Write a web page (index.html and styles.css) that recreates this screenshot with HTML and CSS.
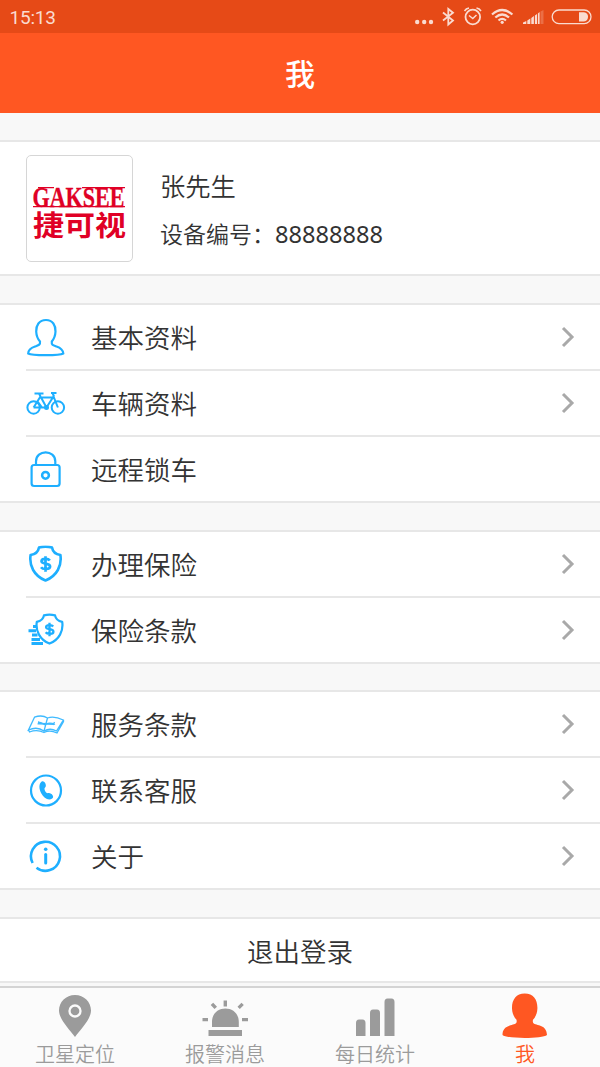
FILE: index.html
```html
<!DOCTYPE html>
<html lang="zh-CN">
<head>
<meta charset="utf-8">
<title>我</title>
<link rel="stylesheet" href="styles.css">
</head>
<body>
<svg class="defs" width="0" height="0">
  <defs>
    <symbol id="chevron" viewBox="0 0 14 22"><path d="M2 2L11 11L2 20" fill="none" stroke="#a9a9a9" stroke-width="3"/></symbol>
    <symbol id="shield" viewBox="0 0 34 37">
      <path d="M10.500 2Q17 .2 23.500 2Q24.600 8.400 31.900 9.500C33.500 20 28.500 30.500 17 35C5.500 30.500.5 20 2.100 9.500Q9.400 8.400 10.500 2Z" fill="none" stroke="currentColor" stroke-width="2.600" stroke-linejoin="round"/>
      <path d="M21.300 15C19.800 12.800 13 12.600 13 15.800C13 19 21.600 17.200 21.600 21C21.600 24.300 14.200 24.100 12.500 21.700M17 10.700V26.300" fill="none" stroke="currentColor" stroke-width="2.700"/>
    </symbol>
  </defs>
</svg>
<div class="screen">
  <header class="top">
    <div class="status">
      <span class="clock">15:13</span>
      <svg class="indicators" width="180" height="24" viewBox="414 5 180 24" fill="none" stroke="#fadbd0" stroke-width="1.500">
        <g fill="#fadbd0" stroke="none"><circle cx="417.200" cy="22" r="2.200"/><circle cx="424.200" cy="22" r="2.200"/><circle cx="431" cy="22" r="2.200"/></g>
        <path d="M443 12.500L453 20.500L448.300 24.500V9L453 12.800L443 20.500" stroke-width="1.800"/>
        <circle cx="472.800" cy="17" r="7.300" stroke-width="1.800"/><path d="M469 15.500L472.800 18.500L476.500 15M464.500 11Q466 8.500 469 8M476.500 8Q479.500 8.500 481 11"/>
        <g stroke-width="2.200"><path d="M492 14.500Q502.200 5.500 512.400 14.500M495.300 17.500Q502.200 11.500 509 17.500M498.500 20.500Q502.200 17.300 506 20.500"/></g><circle cx="502.200" cy="22.300" r="1.600" fill="#fadbd0" stroke="none"/>
        <g fill="#fadbd0" stroke="none"><path d="M523 24V22.500L526.300 21V24ZM527.300 24V20.500L530.300 18.500V24ZM531.300 24V18L533.900 16V24ZM534.900 24V15.500L537 14V24ZM537.900 24V13.500L539.600 12V24Z"/><path d="M540.500 24V11.500L543.500 10V24Z" opacity=".25"/></g>
        <rect x="552.200" y="10" width="38.800" height="13.600" rx="6.800" stroke-width="1.300"/><path d="M579 12.200H584A4.700 4.700 0 0 1 584 21.500H579Z" fill="#fadbd0" stroke="none"/>
      </svg>
    </div>
    <h1 class="title">我</h1>
  </header>

  <main class="content">
    <section class="card profile">
      <div class="avatar">
        <svg width="104" height="104" viewBox="27 156 104 104" fill="#e00025">
          <path d="M38 187H54V188.200H38ZM82 187H125V188.200H82ZM33 206H125V207.300H33Z"/>
          <text class="logo-latin" x="32.500" y="206.500" textLength="92" lengthAdjust="spacingAndGlyphs">GAKSEE</text>
          <text class="logo-han" x="33" y="235.500" textLength="93" lengthAdjust="spacingAndGlyphs">捷可视</text>
        </svg>
      </div>
      <div class="person">
        <div class="name">张先生</div>
        <div class="device">设备编号：<span class="number">88888888</span></div>
      </div>
    </section>

    <section class="card">
      <a class="row">
        <svg class="icon" viewBox="0 0 40 40"><path d="M20 3C13 3 10 8.500 10.200 14.500C10.400 19 12.200 22.500 14 24.500C14.500 28 12.500 28.300 9 29.500C4.500 31 2.300 33.500 2.200 36.500C6 38.700 33.500 38.700 37.300 36.500C37 33.500 35 31 30.500 29.500C27 28.300 25.300 28 25.800 24.500C27.500 22.500 29.300 19 29.500 14.500C29.700 8.500 26.800 3 20 3Z"/></svg>
        <span class="label">基本资料</span><svg class="chevron"><use href="#chevron"/></svg>
      </a>
      <a class="row">
        <svg class="icon bike" viewBox="0 0 40 40"><circle cx="7.600" cy="24.500" r="6.200"/><circle cx="31.900" cy="24.500" r="6.200"/><path d="M7.600 24.500L14.500 13.500L20.500 24.500H7.600M12 19L16 24.500M20.500 24.500L27.500 13.500L31.900 24.500M15.500 14.500H28M8.500 10.500H17.500M25 10H30.500M14.500 13.500L13 10.500M28 13.500L26.500 10"/><circle cx="20.500" cy="24.500" r="1.500"/></svg>
        <span class="label">车辆资料</span><svg class="chevron"><use href="#chevron"/></svg>
      </a>
      <a class="row">
        <svg class="icon" viewBox="0 0 40 40"><rect x="5.600" y="16" width="28" height="21" rx="2.500"/><path d="M10 16V12.500C10 .4 29.300 .4 29.300 12.500V16"/><circle cx="19.500" cy="26.300" r="3.400" stroke-width="2.500"/></svg>
        <span class="label">远程锁车</span>
      </a>
    </section>

    <section class="card">
      <a class="row">
        <svg class="icon" viewBox="0 0 40 40"><use href="#shield" x="2.500" y="1.500" width="34" height="37"/></svg>
        <span class="label">办理保险</span><svg class="chevron"><use href="#chevron"/></svg>
      </a>
      <a class="row">
        <svg class="icon" viewBox="0 0 40 40"><use href="#shield" x="9" y="3" width="29" height="33"/><path d="M7 16.500H10M2.500 20.700H10M6 25H11.500M5.500 29.500H14M5.500 33.500H17" stroke-width="3"/></svg>
        <span class="label">保险条款</span><svg class="chevron"><use href="#chevron"/></svg>
      </a>
    </section>

    <section class="card">
      <a class="row">
        <svg class="icon book" viewBox="0 0 40 40"><path d="M8.500 13.200Q16 10.500 21.500 14Q28 11.500 37.300 16L30.500 27Q24 23.500 18 27Q11 22 2.500 26ZM2.500 26L3.500 28Q11 25 18 28.500Q24 25.500 31 29L37.500 17.500V16M21.500 14L18 27M12 18Q15.500 18.500 18.500 20.500L20 20Q24 18 29 20.500M13 17.500L12 20.500M28.500 18L27 21"/><path d="M13 19.600L28 20.200" stroke-width="1.800"/></svg>
        <span class="label">服务条款</span><svg class="chevron"><use href="#chevron"/></svg>
      </a>
      <a class="row">
        <svg class="icon" viewBox="0 0 40 40"><circle cx="20" cy="20.500" r="15"/><path d="M15.400 11.700C18.500 9.700 21.300 16 19.100 17.400C17.300 18.500 20 23.700 22 23.100C25 22 29 26.700 26.200 28.500C22.500 30.900 17.800 28.300 15.200 23.300C12.800 18.500 12.800 14 15.400 11.700Z" fill="currentColor" stroke="none"/></svg>
        <span class="label">联系客服</span><svg class="chevron"><use href="#chevron"/></svg>
      </a>
      <a class="row">
        <svg class="icon" viewBox="0 0 40 40"><path class="ring" d="M6.600 27A14.500 14.500 0 1 1 10.500 31.700"/><path class="stem" d="M19.700 18.500V27"/><circle cx="19.700" cy="13.300" r="1.800" fill="currentColor" stroke="none"/></svg>
        <span class="label">关于</span><svg class="chevron"><use href="#chevron"/></svg>
      </a>
    </section>

    <section class="card"><a class="row logout">退出登录</a></section>
  </main>

  <nav class="tabs">
    <a class="tab"><svg class="tab-icon" viewBox="0 0 50 50"><path d="M25 4C16 4 9 11 9 19.500C9 28 19 38 25 46C31 38 41 28 41 19.500C41 11 34 4 25 4Z"/><circle cx="25" cy="20" r="5.500" fill="#9b9b9b" stroke="#fbfbfb" stroke-width="2.300"/></svg>卫星定位</a>
    <a class="tab"><svg class="tab-icon" viewBox="0 0 50 50"><path d="M12 36V31C12 13 38.800 13 38.800 31V36ZM8.500 39H42V45H8.500ZM2.500 27H8V30.300H2.500ZM42 27H48V30.300H42ZM23.600 9.500H27V15.500H23.600ZM10.700 14L13.200 11.800L17 15.800L14.500 18ZM37.500 15.800L41.500 11.800L43.800 14L39.800 18Z"/></svg>报警消息</a>
    <a class="tab"><svg class="tab-icon" viewBox="0 0 50 50"><path d="M6 45V32Q6 28.500 9 28.500H12.500Q15.500 28.500 15.500 32V45ZM20 45V22Q20 18.500 23 18.500H27Q30 18.500 30 22V45ZM34.500 45V11Q34.500 7.500 37.500 7.500H41.500Q44.500 7.500 44.500 11V45Z"/></svg>每日统计</a>
    <a class="tab active"><svg class="tab-icon" viewBox="0 0 50 50"><path d="M24.700 2.500C16 2.500 11.700 9 12 17.500C12.200 22 13.500 25.500 16.500 28.800C17.500 33 14.500 33 10.500 34.300C5 36 2.500 38.500 2.500 44C7 48 42.500 48 47 44C46.500 38.500 44.500 36 39 34.300C35 33 32 33 33 28.800C36 25.500 37.200 22 37.400 17.500C37.700 9 33.500 2.500 24.700 2.500Z"/></svg>我</a>
  </nav>
</div>
</body>
</html>
```
FILE: styles.css
```css
* { box-sizing: border-box; }
body { margin: 0; font-family: "Noto Sans CJK SC DemiLight", "Noto Sans CJK SC", sans-serif; font-weight: 350; color: #333; }
.defs { display: block; }
.screen { width: 600px; height: 1067px; display: flex; flex-direction: column; overflow: hidden; background: #f8f8f8; }
.top { flex: none; height: 113px; background: #ff5722; }
.status { height: 33px; padding: 0 6px 0 9.500px; display: flex; align-items: center; justify-content: space-between; background: #e64a17; }
.clock { font: 19px/33px Roboto, sans-serif; padding-top: 1px; letter-spacing: -.2px; color: #fadbd0; }
.title { margin: 0; height: 80px; line-height: 79px; text-align: center; font-family: "Noto Sans CJK SC", sans-serif; font-size: 30px; font-weight: 500; color: #fff; }
.content { flex: 1; min-height: 0; padding-top: 27px; display: flex; flex-direction: column; gap: 27px; overflow: hidden; }
.card { flex: none; background: #fff; border-top: 2px solid #e7e7e7; }
.card:nth-child(3) { margin-bottom: -1px; }
.profile { height: 136px; border-bottom: 2px solid #e7e7e7; display: flex; padding: 13px 26px 0; gap: 27px; }
.avatar { width: 107px; height: 107px; border: 1.500px solid #d6d6d6; border-radius: 5px; overflow: hidden; }
.logo-latin { font: bold 29.500px "Liberation Serif", serif; stroke: #e00025; stroke-width: .3px; }
.logo-han { font: bold 28px "Noto Sans CJK SC", sans-serif; }
.person { padding-top: 11px; }
.name { font-size: 25.300px; line-height: 38px; }
.device { margin-top: 10px; font-size: 23px; line-height: 38px; white-space: nowrap; }
.number { font-family: "Noto Sans", sans-serif; font-weight: 400; font-size: 23.600px; }
.row { height: 66px; display: flex; align-items: center; padding: 0 26px 0 0; margin-left: 26px; border-bottom: 2px solid #e7e7e7; font-size: 26.500px; }
.row:last-child { margin-left: 0; padding-left: 26px; }
.icon { width: 40px; height: 40px; flex: none; color: #1eafff; fill: none; stroke: currentColor; stroke-width: 2.200px; }
.bike { stroke-width: 2px; }
.book { stroke-width: 1.300px; opacity: .85; }
.ring { stroke-width: 2.600px; }
.stem { stroke-width: 3px; stroke-linecap: round; }
.label { flex: 1; margin-left: 25px; line-height: 40px; padding-bottom: 1px; }
.chevron { width: 14px; height: 22px; margin-right: -1px; }
.row.logout { height: 64px; justify-content: center; padding: 0; }
.tabs { flex: none; height: 81px; border-top: 2px solid #d4d4d4; background: #fbfbfb; display: flex; }
.tab { flex: 1; display: flex; flex-direction: column; align-items: center; padding-top: 3px; font-size: 20px; line-height: 26px; color: #9b9b9b; }
.tab-icon { width: 50px; height: 50px; flex: none; fill: currentColor; }
.tab.active { color: #ff5722; }
```
